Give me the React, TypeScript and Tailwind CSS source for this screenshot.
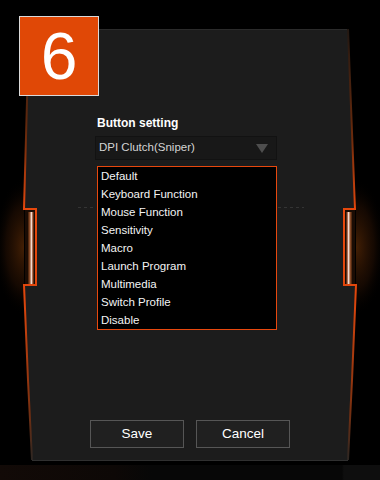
const OPTIONS = [
  "Default",
  "Keyboard Function",
  "Mouse Function",
  "Sensitivity",
  "Macro",
  "Launch Program",
  "Multimedia",
  "Switch Profile",
  "Disable",
];

// glowing side edges, notches and the faint dashed guide line
function Frame() {
  return (
    <svg
      className="pointer-events-none absolute inset-0"
      width="380"
      height="480"
      viewBox="0 0 380 480"
    >
      <defs>
        <linearGradient id="edge" gradientUnits="userSpaceOnUse" x1="0" y1="29" x2="0" y2="460">
          <stop offset="0" stopColor="#221812" />
          <stop offset="0.25" stopColor="#6a2a0c" />
          <stop offset="0.42" stopColor="#e8480c" />
          <stop offset="0.62" stopColor="#e0460c" />
          <stop offset="0.88" stopColor="#7a3010" />
          <stop offset="1" stopColor="#2c2622" />
        </linearGradient>
        <radialGradient id="glowL" cx="24" cy="247" r="60" gradientUnits="userSpaceOnUse" gradientTransform="translate(24 247) scale(0.5 1.15) translate(-24 -247)">
          <stop offset="0" stopColor="#5a2a06" stopOpacity="0.75" />
          <stop offset="0.6" stopColor="#2a1204" stopOpacity="0.5" />
          <stop offset="1" stopColor="#000" stopOpacity="0" />
        </radialGradient>
        <radialGradient id="glowR" cx="356" cy="247" r="60" gradientUnits="userSpaceOnUse" gradientTransform="translate(356 247) scale(0.5 1.15) translate(-356 -247)">
          <stop offset="0" stopColor="#5a2a06" stopOpacity="0.75" />
          <stop offset="0.6" stopColor="#2a1204" stopOpacity="0.5" />
          <stop offset="1" stopColor="#000" stopOpacity="0" />
        </radialGradient>
        <linearGradient id="barL" x1="0" y1="0" x2="1" y2="0">
          <stop offset="0" stopColor="#3a1a06" />
          <stop offset="0.35" stopColor="#a05a34" />
          <stop offset="0.55" stopColor="#fff0e8" />
          <stop offset="0.8" stopColor="#9a5030" />
          <stop offset="1" stopColor="#301606" />
        </linearGradient>
        <linearGradient id="barR" x1="1" y1="0" x2="0" y2="0">
          <stop offset="0" stopColor="#3a1a06" />
          <stop offset="0.35" stopColor="#a05a34" />
          <stop offset="0.55" stopColor="#fff0e8" />
          <stop offset="0.8" stopColor="#9a5030" />
          <stop offset="1" stopColor="#301606" />
        </linearGradient>
      </defs>

      <rect x="0" y="170" width="24" height="150" fill="url(#glowL)" />
      <rect x="356" y="170" width="24" height="150" fill="url(#glowR)" />

      <rect x="25" y="210" width="10" height="75" fill="#1a0c04" />
      <rect x="345" y="210" width="10" height="75" fill="#1a0c04" />
      <rect x="28" y="212" width="6" height="72" fill="url(#barL)" />
      <rect x="346" y="212" width="6" height="72" fill="url(#barR)" />

      <path
        d="M29 29 L24 209 L36 209 L36 285 L24 285 L28 380 L32 460"
        fill="none"
        stroke="url(#edge)"
        strokeWidth="2"
      />
      <path
        d="M348 29 L355 209 L344 209 L344 285 L356 285 L352 380 L348 460"
        fill="none"
        stroke="url(#edge)"
        strokeWidth="2"
      />

      <path d="M78 207.5 H96 M278 207.5 H304" stroke="#343434" strokeWidth="1" strokeDasharray="3 3" />
    </svg>
  );
}

export default function App() {
  return (
    <div
      className="relative h-[480px] w-[380px] overflow-hidden bg-black"
      style={{ fontFamily: '"Liberation Sans", Arial, sans-serif' }}
    >
      <div className="pt-[29px]">
        <div className="ml-[24px] flex h-[432px] w-[332px] flex-col border-y border-t-[#2b2b2b] border-b-[#303030] bg-[#1c1c1c] pt-[86px] pb-[12px] [clip-path:polygon(5px_0,324px_0,331px_180px,320px_180px,320px_256px,332px_256px,328px_351px,324px_432px,8px_432px,4px_351px,0_256px,12px_256px,12px_180px,0_180px)]">
          <div className="ml-[71px] w-[182px]">
            <div className="pl-[2px] text-[12px] font-bold leading-[14px] text-white">Button setting</div>
            <div className="mt-[6px] flex h-[24px] items-center justify-between border border-[#121212] bg-[#181818] pl-[3px] pr-[8px]">
              <span className="text-[11.5px] text-[#d4d4d4]">DPI Clutch(Sniper)</span>
              <span className="h-0 w-0 border-x-[6px] border-t-[9px] border-x-transparent border-t-[#4e4e4e]" />
            </div>
            <ul className="mt-[6px] ml-[2px] w-[180px] border border-[#e8480e] bg-black pl-[3px]">
              {OPTIONS.map((o) => (
                <li key={o} className="text-[11.5px] leading-[18px] text-[#f4f4f4]">
                  {o}
                </li>
              ))}
            </ul>
          </div>

          <div className="mt-auto ml-[66px] flex gap-[12px]">
            <button className="h-[28px] w-[94px] border border-[#565656] bg-[#202020] text-[13.5px] text-white">
              Save
            </button>
            <button className="h-[28px] w-[94px] border border-[#565656] bg-[#202020] text-[13.5px] text-white">
              Cancel
            </button>
          </div>
        </div>
        <div className="mt-[4px] h-[15px] w-full bg-[linear-gradient(90deg,#120a07_0%,#0d0806_30%,#070707_40%,#070707_90%,#0e0e0e_90.5%)]" />
      </div>

      <Frame />

      <div className="absolute left-[19px] top-[16px] flex h-[80px] w-[80px] items-center justify-center border border-[#dadada] bg-[#e04806]">
        <span className="text-[66px] leading-none text-white">6</span>
      </div>
    </div>
  );
}
